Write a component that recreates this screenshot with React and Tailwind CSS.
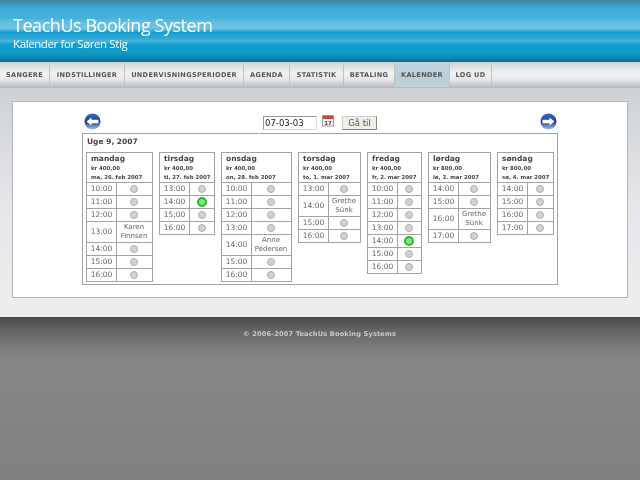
const NAV = [
  ['SANGERE', 'w-[50px]'],
  ['INDSTILLINGER', 'w-[75px]'],
  ['UNDERVISNINGSPERIODER', 'w-[119px]'],
  ['AGENDA', 'w-[46px]'],
  ['STATISTIK', 'w-[54px]'],
  ['BETALING', 'w-[51px]'],
  ['KALENDER', 'w-[55px]', true],
  ['LOG UD', 'w-[42px]'],
];

// free = grey radio, ok = green radio, anything else is a student name
const DAYS = [
  { name: 'mandag', price: 'kr 400,00', date: 'ma, 26. feb 2007', w: 'w-[67px]', rows: [['10:00'], ['11:00'], ['12:00'], ['13:00', 'Karen Finnsen'], ['14:00'], ['15:00'], ['16:00']] },
  { name: 'tirsdag', price: 'kr 400,00', date: 'ti, 27. feb 2007', w: 'w-[56px]', rows: [['13:00'], ['14:00', 'ok'], ['15:00'], ['16:00']] },
  { name: 'onsdag', price: 'kr 400,00', date: 'on, 28. feb 2007', w: 'w-[71px]', rows: [['10:00'], ['11:00'], ['12:00'], ['13:00'], ['14:00', 'Anne Pedersen'], ['15:00'], ['16:00']] },
  { name: 'torsdag', price: 'kr 400,00', date: 'to, 1. mar 2007', w: 'w-[63px]', rows: [['13:00'], ['14:00', 'Grethe Sünk'], ['15:00'], ['16:00']] },
  { name: 'fredag', price: 'kr 400,00', date: 'fr, 2. mar 2007', w: 'w-[55px]', rows: [['10:00'], ['11:00'], ['12:00'], ['13:00'], ['14:00', 'ok'], ['15:00'], ['16:00']] },
  { name: 'lørdag', price: 'kr 800,00', date: 'lø, 3. mar 2007', w: 'w-[63px]', rows: [['14:00'], ['15:00'], ['16:00', 'Grethe Sünk'], ['17:00']] },
  { name: 'søndag', price: 'kr 800,00', date: 'sø, 4. mar 2007', w: 'w-[57px]', rows: [['14:00'], ['15:00'], ['16:00'], ['17:00']] },
];

function Arrow({ flip }) {
  return (
    <svg width="17" height="17" viewBox="0 0 17 17" className={flip ? '-scale-x-100' : ''}>
      <defs>
        <linearGradient id={flip ? 'arrowB' : 'arrowA'} x1="0" y1="0" x2="0" y2="1">
          <stop offset="0" stopColor="#3f6fc0" />
          <stop offset="0.5" stopColor="#123f96" />
          <stop offset="1" stopColor="#a5c4ec" />
        </linearGradient>
      </defs>
      <circle cx="8.5" cy="8.5" r="8" fill={`url(#${flip ? 'arrowB' : 'arrowA'})`} />
      <path d="M2.5 8.5 L7.5 4.5 V6.8 H14.5 V10.2 H7.5 V12.5 Z" fill="#fff" />
    </svg>
  );
}

function CalendarIcon() {
  return (
    <svg width="12" height="12" viewBox="0 0 12 12" className="mb-[3px] ml-[5px]">
      <rect x="0.5" y="0.5" width="11" height="10.5" fill="#f6f3ec" stroke="#a09a90" />
      <rect x="1" y="1" width="10" height="3" fill="#c04a3c" />
      <text x="6" y="9.6" textAnchor="middle" fontSize="5.5" fontWeight="700" fill="#445">17</text>
    </svg>
  );
}

function Radio({ on }) {
  if (on) {
    return <span className="block size-[10px] rounded-full border-2 border-[#2fb52f] bg-[#7fe87f]" />;
  }
  return <span className="block size-[8px] rounded-full border border-[#b0b0b0] bg-[#d2d2d2]" />;
}

function Day({ day }) {
  return (
    <div className={`${day.w} border border-[#a3a3a3] border-b-0 text-[#666]`}>
      <div className="h-[30px] border-b border-[#a3a3a3] pl-[4px] pt-[1px] whitespace-nowrap">
        <div className="text-[7.5px] leading-[10px] font-bold text-[#444]">{day.name}</div>
        <div className="text-[5.4px] leading-[9px] font-bold text-[#444]">{day.price}</div>
        <div className="text-[5.4px] leading-[8px] font-bold text-[#444]">{day.date}</div>
      </div>
      {day.rows.map(([time, value]) => {
        const isName = value && value !== 'ok';
        return (
          <div key={time} className={`flex border-b border-[#a3a3a3] ${isName ? 'h-[21px]' : 'h-[13px]'}`}>
            <div className="w-[30px] shrink-0 border-r border-[#a3a3a3] flex items-center justify-center text-[7.5px]">{time}</div>
            <div className="flex-1 pr-[1px] flex items-center justify-center text-center text-[7px] leading-[9.5px]">
              {isName ? value : <Radio on={value === 'ok'} />}
            </div>
          </div>
        );
      })}
    </div>
  );
}

export default function App() {
  return (
    <div className="min-h-screen flex flex-col font-['DejaVu_Sans',sans-serif] bg-[#808080] blur-[0.35px]">
      <header className="h-[62px] pl-[13px] pt-[15px] text-white bg-[linear-gradient(180deg,#3d7f9c_0px,#3f9cc2_5px,#3fb0da_10px,#45b2da_18px,#62bde0_22px,#6fc4e4_28px,#55b5dc_30px,#139dd0_32px,#2fa9d6_38px,#50b6dc_41px,#14a0d0_44px,#0f9aca_52px,#0c88b4_58px,#0a6a8c_62px)]">
        <h1 className="font-['Open_Sans',sans-serif] text-[18px] leading-[20px] tracking-[-0.46px]">TeachUs Booking System</h1>
        <p className="font-['Open_Sans',sans-serif] text-[11.5px] leading-[16px] tracking-[-0.4px] mt-[1px]">Kalender for Søren Stig</p>
      </header>

      <nav className="h-[26px] flex bg-[linear-gradient(180deg,#d0d3d6_0%,#f2f3f4_45%,#e4e5e7_70%,#b4b6b8_100%)]">
        {NAV.map(([label, w, active]) => (
          <a
            key={label}
            className={`${w} h-[24px] mt-[1px] pt-[2px] flex items-center justify-center border-r border-[#bfc1c3] text-[6.6px] font-bold tracking-[0.3px] text-[#555] ${active ? 'bg-[linear-gradient(180deg,#bdd2dc,#b8ced8_70%,#c4d4da)]' : ''}`}
          >
            {label}
          </a>
        ))}
      </nav>

      <main className="h-[229px] pt-[13px] pl-[12px] bg-[linear-gradient(180deg,#cfd2d5_0%,#e4e6e9_50%,#eceef0_100%)]">
        <div className="w-[616px] h-[197px] bg-white border border-[#b5b5b5] pl-[69px] pt-[11px]">
          <div className="w-[476px] h-[20px] pl-[2px] pr-[1px] flex items-start">
            <Arrow />
            <div className="flex-1 flex items-end justify-center h-[17px] pr-[1px]">
              <div className="w-[54px] h-[14px] border border-[#999] border-r-[#ddd] border-b-[#ddd] pl-[1px] flex items-center text-[8.5px] text-[#222]">07-03-03</div>
              <CalendarIcon />
              <button className="ml-[8px] w-[35px] h-[14px] border border-[#ccc] border-r-[#888] border-b-[#888] bg-[#f0eee6] text-[8.5px] text-[#555]">Gå til</button>
            </div>
            <Arrow flip />
          </div>

          <div className="w-[476px] h-[152px] border border-[#a3a3a3] px-[3px]">
            <div className="h-[18px] pl-[1px] pt-[2px] text-[7.5px] leading-[12px] font-bold text-[#444]">Uge 9, 2007</div>
            <div className="flex items-start gap-[6px]">
              {DAYS.map((day) => (
                <Day key={day.name} day={day} />
              ))}
            </div>
          </div>
        </div>
      </main>

      <footer className="flex-1 pl-[243px] pt-[12px] bg-[linear-gradient(180deg,#4a4a4a_0px,#666_14px,#808080_34px,#878787_46px,#808080_100%)]">
        <p className="text-[6.6px] leading-[10px] font-bold tracking-[0.17px] text-[#c8c8c8]">© 2006-2007 TeachUs Booking Systems</p>
      </footer>
    </div>
  );
}
